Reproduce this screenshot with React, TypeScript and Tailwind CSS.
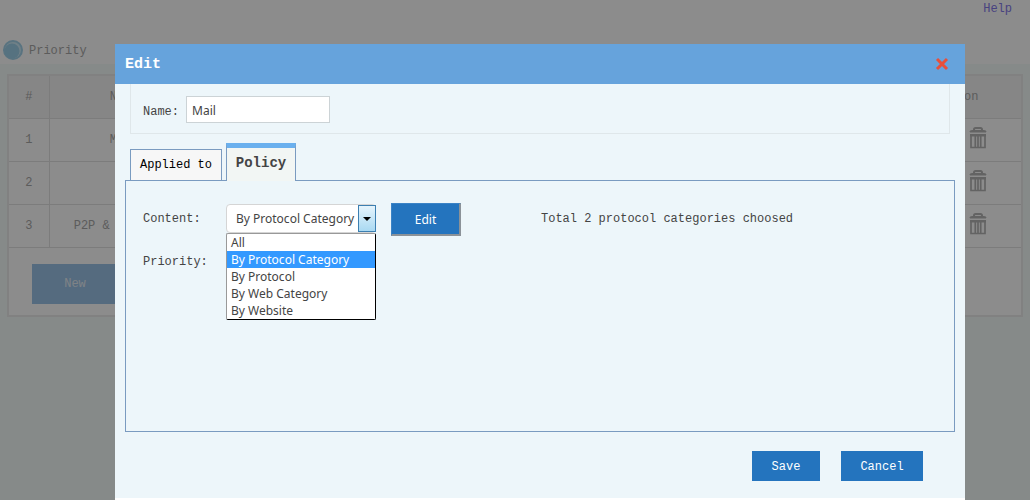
import { useState } from "react";

const rows = [
  { id: 1, name: "Mail" },
  { id: 2, name: "IM" },
  { id: 3, name: "P2P & Web" },
];

const options = [
  "All",
  "By Protocol Category",
  "By Protocol",
  "By Web Category",
  "By Website",
];

const TrashIcon = () => (
  <svg width="18" height="22" viewBox="0 0 18 22" fill="none" stroke="#b5b5b5">
    <path d="M5 3.5V2.5Q5 1 6.5 1h5Q13 1 13 2.5v1" strokeWidth="2" />
    <path d="M1 5Q1 3.5 2.5 3.5h13Q17 3.5 17 5z" fill="#b5b5b5" strokeWidth="1" />
    <path d="M1 7h16v2.500H1z" fill="#b5b5b5" stroke="none" />
    <path d="M2 8v12.500h14V8M6.300 8v12M9 8v12M11.700 8v12" strokeWidth="1.700" />
  </svg>
);

const Page = () => {
  return (
    <div className="min-h-screen bg-[#f4fbf9] text-[#a8a8a8]">
      <div className="h-16 bg-white flex flex-col justify-between">
        <div className="flex justify-end pr-[18px]">
          <a href="#help" className="text-[#8478ea]">
            Help
          </a>
        </div>
        <div className="flex items-center gap-[5px] pl-[2px] pb-[3px]">
          <svg width="22" height="22" viewBox="0 0 22 22">
            <circle cx="11" cy="11" r="9" fill="#cdeaf6" stroke="#a2d2ea" strokeWidth="2" />
            <circle cx="10" cy="12" r="7.500" fill="#9dcfe9" />
          </svg>
          <span className="pt-[2px]">Priority</span>
        </div>
      </div>
      <div className="mt-[10px] mx-[7px] border-2 border-[#ececec] bg-white">
        <table className="w-full table-fixed border-collapse text-center">
          <thead>
            <tr className="h-[42px] bg-[#f5f5f5]">
              <th className="w-10 font-normal">#</th>
              <th className="w-[90px] border-l border-[#e2e2e2] font-normal text-right">
                Name
              </th>
              <th className="border-l border-[#e2e2e2] font-normal">Content</th>
              <th className="w-[129px] border-l border-[#e2e2e2] font-normal">Action</th>
            </tr>
          </thead>
          <tbody>
            {rows.map((row) => (
              <tr key={row.id} className="h-[43px] border-y border-[#e2e2e2]">
                <td>{row.id}</td>
                <td className="border-l border-[#e2e2e2] text-right">{row.name}</td>
                <td className="border-l border-[#e2e2e2]"></td>
                <td className="border-l border-[#e2e2e2]">
                  <button
                    aria-label={`Delete ${row.name}`}
                    className="block ml-[76px] mb-1"
                  >
                    <TrashIcon />
                  </button>
                </td>
              </tr>
            ))}
          </tbody>
        </table>
        <div className="h-[67px] pt-4 pl-[23px]">
          <button className="w-[120px] h-10 bg-[#9cc3e7] text-[#e6eef5] pr-[34px]">
            New
          </button>
        </div>
      </div>
    </div>
  );
};

const ContentSelect = () => {
  const [value, setValue] = useState("By Protocol Category");
  const [open, setOpen] = useState(true);

  return (
    <div className="relative w-[150px] font-['Noto_Sans',sans-serif] text-[#444]">
      <select
        id="content"
        value={value}
        onChange={(e) => setValue(e.target.value)}
        onClick={() => setOpen(!open)}
        className="appearance-none block w-full h-[29px] pl-[9px] bg-white border border-[#d5d5d5] rounded-sm outline-none"
      >
        {options.map((item) => (
          <option key={item}>{item}</option>
        ))}
      </select>
      <span className="absolute right-0 top-[1px] w-[18px] h-[27px] flex items-center justify-center border border-[#3c7fb1] bg-linear-to-b from-[#e5f4fc] to-[#a9d9f2] pointer-events-none">
        <svg width="8" height="4" viewBox="0 0 8 4">
          <path d="M0 0h8L4 4z" fill="#000" />
        </svg>
      </span>
      {open && (
        <ul
          role="listbox"
          aria-label="Content"
          className="absolute left-0 top-[29px] w-full bg-white border border-t-[#999] border-l-[#999] border-r-black border-b-black rounded-[2px]"
        >
          {options.map((item) => (
            <li
              key={item}
              role="option"
              aria-selected={item === value}
              onClick={() => {
                setValue(item);
                setOpen(false);
              }}
              className={`h-[17px] leading-[17px] pl-1 cursor-default ${
                item === value ? "bg-[#3399ff] text-white" : ""
              }`}
            >
              {item}
            </li>
          ))}
        </ul>
      )}
    </div>
  );
};

const EditDialog = () => {
  const [name, setName] = useState("Mail");

  return (
    <div
      role="dialog"
      aria-labelledby="dialog-title"
      className="ml-[115px] mr-[65px] mt-11 bg-[#edf6fa] text-[#444]"
    >
      <div className="h-10 pl-[10px] pr-4 flex items-center justify-between bg-[#66a3dc]">
        <h2 id="dialog-title" className="pt-[2px] text-[15px] font-bold text-white">
          Edit
        </h2>
        <button aria-label="Close">
          <svg width="14" height="14" viewBox="0 0 14 14">
            <path d="M2 2l10 10M12 2L2 12" stroke="#e84f3a" strokeWidth="3" />
          </svg>
        </button>
      </div>
      <div className="mx-[15px] h-[50px] pt-[2px] pl-3 flex items-center gap-[7px] border border-t-0 border-[#dfe7ea]">
        <label htmlFor="name" className="pt-1">
          Name:
        </label>
        <input
          id="name"
          type="text"
          value={name}
          onChange={(e) => setName(e.target.value)}
          className="w-36 h-[27px] pl-[5px] pt-[2px] bg-white border border-[#ccd3d6] outline-none font-['Noto_Sans',sans-serif]"
        />
      </div>
      <div role="tablist" className="mt-[9px] pl-[15px] flex items-end gap-1">
        <button
          role="tab"
          aria-selected="false"
          className="w-[92px] h-[31px] bg-[#f7f7f7] border border-b-0 border-[#7a9bc0] text-black"
        >
          Applied to
        </button>
        <button
          role="tab"
          aria-selected="true"
          className="w-[70px] h-[38px] -mb-px pb-1 bg-[#f2f6f4] border border-b-0 border-t-5 border-[#7a9bc0] border-t-[#6ab0ee] text-[14px] font-bold"
        >
          Policy
        </button>
      </div>
      <div
        role="tabpanel"
        className="mx-[10px] h-[252px] pl-[17px] pt-[22px] border border-[#7a9bc0]"
      >
        <div className="flex items-start">
          <label htmlFor="content" className="w-[83px] pt-[7px]">
            Content:
          </label>
          <div className="pt-px">
            <ContentSelect />
          </div>
          <button className="ml-[15px] w-[70px] h-[33px] pt-px bg-[#2474be] text-white font-['Noto_Sans',sans-serif] border border-r-2 border-b-2 border-[#3b83c6] border-r-[#8b9298] border-b-[#8b9298]">
            Edit
          </button>
          <p className="ml-20 pt-[7px]">Total 2 protocol categories choosed</p>
        </div>
        <p className="mt-[17px]">Priority:</p>
      </div>
      <div className="h-[66px] pr-[42px] pt-[19px] flex justify-end gap-[21px]">
        <button className="w-[68px] h-[30px] shrink-0 pt-[2px] bg-[#2474be] text-white">
          Save
        </button>
        <button className="w-[82px] h-[30px] shrink-0 pt-[2px] bg-[#2474be] text-white">
          Cancel
        </button>
      </div>
      <div className="h-[2px] bg-white" />
    </div>
  );
};

const App = () => {
  return (
    <div className="text-[12px] leading-[18px] font-['Liberation_Mono',monospace]">
      <Page />
      <div className="fixed inset-0 bg-black/45 overflow-hidden">
        <EditDialog />
      </div>
    </div>
  );
};

export default App;
